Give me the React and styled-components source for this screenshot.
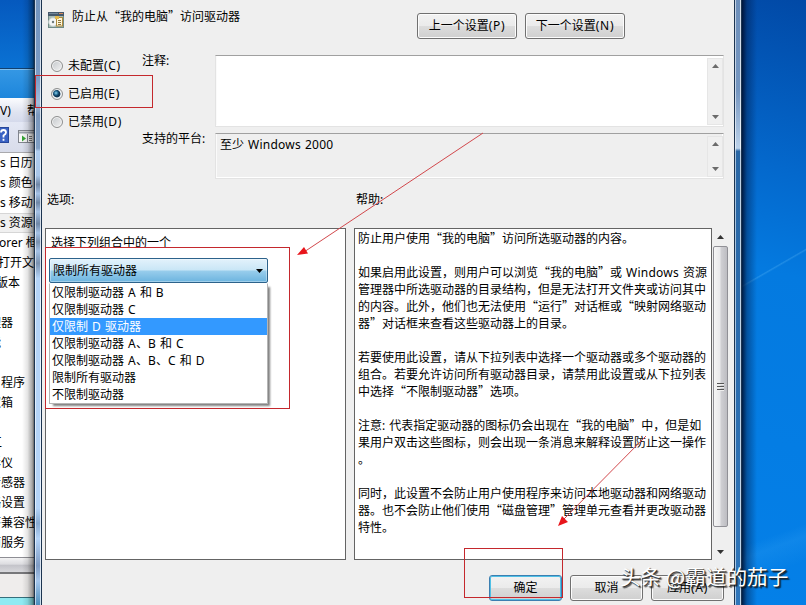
import styled, { createGlobalStyle } from "styled-components";

const GlobalStyle = createGlobalStyle`
  * {
    box-sizing: border-box;
  }
  body {
    margin: 0;
    overflow: hidden;
  }
`;

const Desktop = styled.div`
  position: relative;
  display: flex;
  width: 806px;
  height: 605px;
  overflow: hidden;
  color: #000;
  font: 12px/17px "Noto Sans", "Noto Sans CJK SC", sans-serif;
  white-space: nowrap;
`;

const Quote = styled.span`
  font-family: "Noto Sans CJK SC", sans-serif;
  line-height: 1;
`;

const Latin = styled.span`
  letter-spacing: ${({ $wide }) => ($wide ? 0.7 : 0.25)}px;
  word-spacing: 0.6px;
`;

/* ---------- window behind the dialog ---------- */
const BackWindow = styled.div`
  position: relative;
  display: flex;
  flex-direction: column;
  flex: 0 0 34px;
  overflow: hidden;
  background: #fff;

  &::after {
    content: "";
    position: absolute;
    top: 0;
    right: 0;
    bottom: 0;
    width: 12px;
    background: linear-gradient(
      90deg,
      transparent,
      rgba(0, 0, 0, 0.1) 45%,
      rgba(0, 0, 0, 0.35) 85%,
      rgba(0, 0, 0, 0.6)
    );
  }
`;

const Wallpaper = styled.div`
  flex: 0 0 69px;
  background: linear-gradient(#0559be, #0a72d4);
  border-bottom: 1px solid #12406f;
`;

const BackTitle = styled.div`
  flex: 0 0 29px;
  background: linear-gradient(#3497e4, #1d86dc);
  border-top: 1px solid #7fc0f2;
`;

const BackMenu = styled.div`
  display: flex;
  flex: 0 0 24px;
  align-items: center;
  justify-content: space-between;
  background: linear-gradient(#fbfcfe, #dfe3f0 60%, #d5daec);

  span:last-child {
    margin-right: -5px;
  }
`;

const BackToolbar = styled.div`
  display: flex;
  align-items: center;
  flex: 0 0 31px;
  background: linear-gradient(#e4e8f5, #d8dcea);
  border-bottom: 1px solid #a9a9ad;

  svg {
    flex: none;
    margin-top: -5px;
  }
`;

const BackRow = styled.div`
  flex: 0 0 20px;
  line-height: 20px;
  text-indent: ${({ $start }) => $start}px;
  background: ${({ $active }) => ($active ? "#f0f0f0" : "#fff")};
  box-shadow: ${({ $active }) =>
    $active ? "inset 0 1px #d6d6d6, inset 0 -1px #d6d6d6" : "none"};
`;

const BackScroll = styled.div`
  flex: 0 0 15px;
  margin-top: 4px;
  border-top: 1px solid #8e8e94;
  background: linear-gradient(#f3f3f4, #dcdce0 45%, #c3c3c9 50%, #d8d8dc);
`;

const BackStatus = styled.div`
  flex: 0 0 25px;
  border-top: 2px solid #77777a;
  background: #efedec;
`;

const BackEdge = styled.div`
  flex: 1;
  border-top: 1px solid #356f7c;
  background: #8feaf2;
`;

/* ---------- dialog ---------- */
const Frame = styled.div`
  flex: 0 0 ${({ $width }) => $width}px;
  border: solid #1c3450;
  border-width: 0 1px;
  box-shadow: inset 1px 0 rgba(255, 255, 255, 0.6),
    inset -1px 0 rgba(255, 255, 255, 0.7);
  background: ${({ $fill }) => $fill};
`;

const Dialog = styled.main`
  display: flex;
  flex-direction: column;
  flex: 0 0 692px;
  background: #efefef;
`;

const Header = styled.header`
  display: flex;
  height: 55px;
  padding-left: 6px;

  svg {
    margin-top: 11px;
  }
`;

const Title = styled.div`
  width: 345px;
  margin: 8px 0 0 8px;
`;

const HeaderButtons = styled.div`
  display: flex;
  gap: 8px;
  margin-top: 13px;
`;

const Button = styled.button`
  width: ${({ $width }) => $width}px;
  height: 26px;
  padding: 0 0 1px;
  color: #000;
  font: inherit;
  border: 1px solid ${({ $primary }) => ($primary ? "#3c7fb1" : "#707070")};
  border-radius: 3px;
  box-shadow: inset 0 0 0 1px ${({ $primary }) => ($primary ? "#4fc0e6" : "#fcfcfc")};
  background: linear-gradient(#f2f2f2, #ebebeb 48%, #dddddd 50%, #cfcfcf);
`;

const Settings = styled.section`
  display: grid;
  grid-template-columns: 100px 73px 509px;
  height: 124px;
`;

const Radios = styled.div`
  display: flex;
  flex-direction: column;
  gap: 11px;
  padding: 2px 0 0 9px;
`;

const RadioLabel = styled.label`
  display: flex;
  align-items: center;
  gap: 5px;
`;

const Radio = styled.span`
  width: 12px;
  height: 12px;
  border: 1px solid #8e8f8f;
  border-radius: 50%;
  box-shadow: inset 0 0 0 1px #f4f4f4;
  background: ${({ $checked }) =>
    $checked
      ? "radial-gradient(circle at 4px 4px, #8fd3ee 0, #1f6690 2px, #0d3351 3.2px, transparent 4px), radial-gradient(circle, #123a59 3px, #dce6ec 3.8px)"
      : "linear-gradient(135deg, #c3c7cb, #f3f3f3)"};
`;

const FieldLabels = styled.div`
  display: flex;
  flex-direction: column;
  gap: 61px;
  margin-top: -3px;
`;

const Fields = styled.div`
  display: flex;
  flex-direction: column;
  gap: 6px;
`;

const Field = styled.div`
  display: flex;
  justify-content: space-between;
  height: ${({ $height }) => $height}px;
  padding: 2px 0 1px 4px;
  border: 1px solid #e3e3e3;
  border-top-color: #a0a0a0;
  box-shadow: inset -1px -1px #fff, inset 1px 0 #fafafa;
  background: ${({ $readOnly }) => ($readOnly ? "#efefef" : "#fff")};
`;

const ScrollTrack = styled.div`
  display: flex;
  flex-direction: column;
  align-items: center;
  justify-content: space-between;
  width: 16px;
  padding: 5px 0;
  background: #f0f0f0;
  border: 1px solid #e6e6e6;
`;

const ArrowGlyph = styled.svg`
  display: block;
  flex: none;
  fill: ${({ $color }) => $color || "#6b6b6b"};
`;

const PanelLabels = styled.div`
  display: flex;
  height: 49px;
  padding: 12px 0 0 5px;

  span {
    width: 309px;
  }
`;

const Panels = styled.section`
  display: flex;
  height: 332px;
  padding-left: 3px;
`;

const OptionsPanel = styled.div`
  width: 301px;
  margin-right: 8px;
  padding: 5px 3px 4px;
  border: 1px solid #646464;
  background: #fff;
`;

const OptionsCaption = styled.div`
  height: 14px;
  margin-bottom: 10px;
  padding-left: 2px;
  overflow: hidden;
`;

const Combo = styled.div`
  display: flex;
  align-items: center;
  justify-content: space-between;
  width: 219px;
  height: 25px;
  padding: 0 4px 0 3px;
  border: 1px solid #2c628b;
  border-radius: 2px;
  box-shadow: inset 0 0 0 1px rgba(255, 255, 255, 0.35);
  background: linear-gradient(#e3f2fb, #c9e6f6 48%, #98cdec 52%, #6cb4df);
`;

const List = styled.ul`
  width: 219px;
  margin: 0;
  padding: 0;
  list-style: none;
  border: 1px solid #b5b5b5;
  border-top-color: #fff;
  box-shadow: 3px 3px 2px -1px #808080;
  background: #fff;
`;

const ListItem = styled.li`
  padding-left: 2px;
  color: ${({ $selected }) => ($selected ? "#fff" : "#000")};
  background: ${({ $selected }) => ($selected ? "#3399ff" : "transparent")};
`;

const HelpPanel = styled.div`
  width: 358px;
  padding: 1px 3px;
  border: 1px solid #646464;
  background: #fff;
`;

const HelpLine = styled.div`
  height: 17px;
`;

const HelpScroll = styled.div`
  display: flex;
  flex-direction: column;
  align-items: center;
  width: 17px;
  padding: 7px 0 6px;
`;

const Thumb = styled.div`
  display: flex;
  flex-direction: column;
  align-items: center;
  justify-content: center;
  gap: 1px;
  width: 15px;
  height: 281px;
  margin: 7px 0 23px;
  border: 1px solid #909096;
  border-radius: 2px;
  background: linear-gradient(90deg, #f5f5f5, #e9e9eb 45%, #cfcfd3 55%, #bdbdc2);

  i {
    width: 7px;
    height: 2px;
    background: #555;
    border-bottom: 1px solid #eee;
  }
`;

const Footer = styled.footer`
  display: flex;
  gap: 8px;
  justify-content: flex-end;
  padding: 15px 10px 0 0;
`;

const RightWallpaper = styled.div`
  flex: 1;
  background: linear-gradient(
      90deg,
      rgba(0, 12, 40, 0.85),
      rgba(0, 20, 60, 0.4) 5px,
      transparent 15px
    ),
    linear-gradient(160deg, transparent 87%, rgba(90, 190, 255, 0.13) 89%, transparent 93%),
    linear-gradient(
      150deg,
      transparent 44.400%,
      rgba(130, 210, 255, 0.22) 44.600%,
      transparent 44.900%
    ),
    linear-gradient(195deg, #0149a6, #0468cc 28%, #047ae0 45%, #0480e8);
`;

/* ---------- marks drawn over the windows ---------- */
const MarkBox = styled.div`
  position: absolute;
  top: ${({ $top }) => $top}px;
  left: ${({ $left }) => $left}px;
  width: ${({ $width }) => $width}px;
  height: ${({ $height }) => $height}px;
  border: 1px solid #c4282d;
`;

const MarkArrows = styled.svg`
  position: absolute;
  top: 0;
  left: 0;
`;

const Watermark = styled.div`
  position: absolute;
  top: 561px;
  left: 620px;
  color: #fff;
  font: 20.6px/30px "Noto Sans CJK SC", sans-serif;
  text-shadow: 1px 1px 1px #222, 2px 2px 1px rgba(0, 0, 0, 0.6);
`;

const backRows = [
  ["s 日历", 0],
  ["s 颜色", 0],
  ["s 移动", 0],
  ["s 资源", 0, true],
  ["orer 框", -1],
  ["打开文件", -2],
  ["版本", -4],
  ["", 0],
  ["理器", -11],
  ["能", -11],
  ["", 0],
  ["程序", 1],
  ["取箱", -11],
  ["", 0],
  ["工", -10],
  ["影仪", -11],
  ["传感器", -11],
  ["略设置", -11],
  ["序兼容性", -11],
  ["面服务", -11],
];

const options = [
  "仅限制驱动器 A 和 B",
  "仅限制驱动器 C",
  "仅限制 D 驱动器",
  "仅限制驱动器 A、B 和 C",
  "仅限制驱动器 A、B、C 和 D",
  "限制所有驱动器",
  "不限制驱动器",
];

const helpLines = [
  "防止用户使用“我的电脑”访问所选驱动器的内容。",
  "",
  "如果启用此设置，则用户可以浏览“我的电脑”或 Windows 资源",
  "管理器中所选驱动器的目录结构，但是无法打开文件夹或访问其中",
  "的内容。此外，他们也无法使用“运行”对话框或“映射网络驱动",
  "器”对话框来查看这些驱动器上的目录。",
  "",
  "若要使用此设置，请从下拉列表中选择一个驱动器或多个驱动器的",
  "组合。若要允许访问所有驱动器目录，请禁用此设置或从下拉列表",
  "中选择“不限制驱动器”选项。",
  "",
  "注意: 代表指定驱动器的图标仍会出现在“我的电脑”中，但是如",
  "果用户双击这些图标，则会出现一条消息来解释设置防止这一操作",
  "。",
  "",
  "同时，此设置不会防止用户使用程序来访问本地驱动器和网络驱动",
  "器。也不会防止他们使用“磁盘管理”管理单元查看并更改驱动器",
  "特性。",
];

// the curly quotes take a full em in the CJK font only
function Text({ children }) {
  return (
    <span>
      {children.split(/([“”]|[A-Za-z0-9() ]+)/).map((part, i) => {
        if (i % 2 === 0) return part;
        if (/[“”]/.test(part)) return <Quote key={i}>{part}</Quote>;
        return (
          <Latin key={i} $wide={part.startsWith("(")}>
            {part}
          </Latin>
        );
      })}
    </span>
  );
}

function Arrow({ down, color }) {
  return (
    <ArrowGlyph width="7" height="4" $color={color}>
      <path d={down ? "M0 0h7L3.5 4z" : "M0 4h7L3.5 0z"} />
    </ArrowGlyph>
  );
}

function PolicyIcon() {
  return (
    <svg width="16" height="17" viewBox="0 0 16 17">
      <rect x="0.5" y="1.5" width="15" height="15" fill="#a9bdb4" stroke="#6f8a86" />
      <rect x="0" y="1" width="16" height="4" fill="#46596c" />
      <path d="M1 2.500h9" stroke="#71869a" />
      <path d="M11 2.500h4" stroke="#d98a5c" />
      <circle cx="5" cy="11" r="4.300" fill="#f4f6f6" stroke="#c3cdcb" />
      <circle cx="5" cy="11" r="1.200" fill="#6f7a7c" />
      <rect x="8.5" y="6.5" width="6" height="8.500" fill="#fff6d8" stroke="#b08a3c" />
      <rect x="7" y="5" width="4" height="3" fill="#e2b94e" />
      <path d="M10 9.500h3M10 11.500h3M10 13.500h3" stroke="#8a7440" />
    </svg>
  );
}

export default function App() {
  return (
    <>
      <GlobalStyle />
      <Desktop>
        <BackWindow>
          <Wallpaper />
          <BackTitle />
          <BackMenu>
            <span>V)</span>
            <span>帮</span>
          </BackMenu>
          <BackToolbar>
            <svg width="35" height="20">
              <rect x="-6" y="2.5" width="14.5" height="15" fill="#3a62c4" stroke="#27479b" />
              <path
                d="M1 7.500q0-2.500 2.500-2.500t2.500 2.500q0 1.500-2.500 3v2M3.500 13.800v2"
                stroke="#fff"
                strokeWidth="1.800"
                fill="none"
              />
              <rect x="18.500" y="5.500" width="17" height="12" fill="#f8f8f8" stroke="#81858e" />
              <path d="M19 7.500h16" stroke="#9da3ad" strokeWidth="2" />
              <path d="M27.500 9v8" stroke="#81858e" />
              <path d="M22 10.500l4 3-4 3z" fill="#36a336" />
              <path d="M29 11.500h3M29 13.500h3M29 15.500h3" stroke="#777" />
            </svg>
          </BackToolbar>
          {backRows.map(([text, start, active], i) => (
            <BackRow key={i} $start={start} $active={active}>
              {text}
            </BackRow>
          ))}
          <BackScroll />
          <BackStatus />
          <BackEdge />
        </BackWindow>

        <Frame
          $width={8}
          $fill="linear-gradient(#7294be, #7b9cc6 13%, #a4bedd 17%, #7b98bd 19%, #809fc4 24.500%, #b0cdf0 25%, #a9c6e8 29%, #6f87a6 30.500%, #a5c2e6 32%, #6f87a6 33.500%, #a5c2e6 35%, #6f87a6 37%, #a5c2e6 38.500%, #7a92b0 40%, #a5c2e6 41.500%, #7a92b0 43.500%, #b4d4f8 46%, #b4d4f8 84%, #88abd2 86.500%, #b4d4f8 89%, #7f9cc4 93.500%, #a5c6ec 96%, #4d8fbd)"
        />
        <Dialog>
          <Header>
            <PolicyIcon />
            <Title>
              <Text>防止从“我的电脑”访问驱动器</Text>
            </Title>
            <HeaderButtons>
              <Button $width={100}>
                <Text>上一个设置(P)</Text>
              </Button>
              <Button $width={100}>
                <Text>下一个设置(N)</Text>
              </Button>
            </HeaderButtons>
          </Header>

          <Settings>
            <Radios>
              <RadioLabel>
                <Radio />
                <Text>未配置(C)</Text>
              </RadioLabel>
              <RadioLabel>
                <Radio $checked />
                <Text>已启用(E)</Text>
              </RadioLabel>
              <RadioLabel>
                <Radio />
                <Text>已禁用(D)</Text>
              </RadioLabel>
            </Radios>
            <FieldLabels>
              <span>注释:</span>
              <span>支持的平台:</span>
            </FieldLabels>
            <Fields>
              <Field $height={72}>
                <span />
                <ScrollTrack>
                  <Arrow />
                  <Arrow down />
                </ScrollTrack>
              </Field>
              <Field $height={46} $readOnly>
                <Text>至少 Windows 2000</Text>
                <ScrollTrack>
                  <Arrow />
                  <Arrow down />
                </ScrollTrack>
              </Field>
            </Fields>
          </Settings>

          <PanelLabels>
            <span>选项:</span>
            <span>帮助:</span>
          </PanelLabels>

          <Panels>
            <OptionsPanel>
              <OptionsCaption>选择下列组合中的一个</OptionsCaption>
              <Combo>
                限制所有驱动器
                <Arrow down color="#000" />
              </Combo>
              <List>
                {options.map((option, i) => (
                  <ListItem key={option} $selected={i === 2}>
                    <Text>{option}</Text>
                  </ListItem>
                ))}
              </List>
            </OptionsPanel>
            <HelpPanel>
              {helpLines.map((line, i) => (
                <HelpLine key={i}>
                  <Text>{line}</Text>
                </HelpLine>
              ))}
            </HelpPanel>
            <HelpScroll>
              <Arrow color="#333" />
              <Thumb>
                <i />
                <i />
                <i />
              </Thumb>
              <Arrow down color="#333" />
            </HelpScroll>
          </Panels>

          <Footer>
            <Button $width={73} $primary>
              确定
            </Button>
            <Button $width={73}>取消</Button>
            <Button $width={73}>
              <Text>应用(A)</Text>
            </Button>
          </Footer>
        </Dialog>
        <Frame
          $width={8}
          $fill="linear-gradient(#6d8fba, #7596c0 15%, #bcd2ea 24.500%, #2a67a5 25%, #2b6cae 60%, #2f76ba)"
        />
        <RightWallpaper />

        <MarkBox $left={35} $top={75} $width={118} $height={33} />
        <MarkBox $left={45} $top={247} $width={245} $height={162} />
        <MarkBox $left={464} $top={548} $width={99} $height={50} />
        <MarkArrows width="806" height="605">
          <path d="M483 133L304 252M646 436L564 519" stroke="#d2484c" fill="none" />
          <path d="M297 255l7-8 4 6.500zM558 526l4-10 6 6z" fill="#e8151b" />
        </MarkArrows>
        <Watermark>头条 @霸道的茄子</Watermark>
      </Desktop>
    </>
  );
}
